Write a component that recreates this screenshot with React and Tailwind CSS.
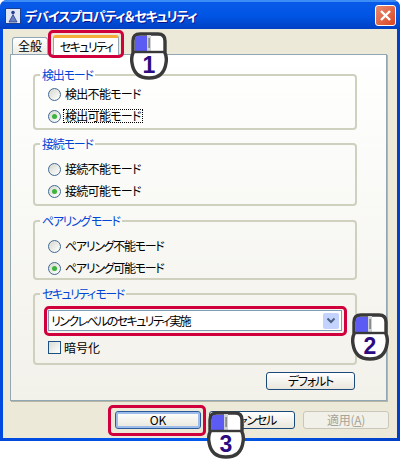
const jp = { fontFamily: '"Noto Sans CJK JP", "Liberation Sans", sans-serif' };
const palt = ' [font-feature-settings:"palt"] ';

function Radio({ checked, label, focus, track }) {
  return (
    <label className={"flex items-center h-[22px] gap-[3px] text-[12px] leading-none text-black whitespace-nowrap" + palt}>
      <span className="flex items-center justify-center w-[13px] h-[13px] rounded-full border border-[#3f6a94] bg-gradient-to-br from-[#d8d8d0] to-white shrink-0">
        {checked && <span className="w-[5px] h-[5px] rounded-full bg-[#3cb43c]" />}
      </span>
      <span className={(focus ? "outline outline-1 outline-dotted outline-black px-px " : "px-px ") + (track || "tracking-[-0.7px]")}>{label}</span>
    </label>
  );
}

function Group({ title, track, className, children }) {
  return (
    <fieldset className={"border-2 border-[#d0d0bf] rounded-[4px] pl-[13px] " + className}>
      <legend className={"-ml-[8px] px-[2px] text-[12px] leading-[14px] text-[#0046d5] whitespace-nowrap " + track + palt}>{title}</legend>
      {children}
    </fieldset>
  );
}

function Btn({ children, className, disabled }) {
  return (
    <button className={"flex items-center justify-center h-[18px] rounded-[3px] border text-[12px] leading-none whitespace-nowrap" + palt +
      (disabled ? "border-[#c9c7ba] text-[#a5a496] bg-[#f2f1e9] " : "border-[#1b4a7a] text-black bg-gradient-to-b from-white to-[#e9e7dc] ") + className}>
      {children}
    </button>
  );
}

function Mouse({ n, className }) {
  return (
    <svg className={"absolute " + className} width="38" height="50" viewBox="0 0 38 50">
      <path d="M10 3 H28 Q35 3 35 10 V22 Q37 26 36 32 Q34 47 19 47 Q4 47 2 32 Q1 26 3 22 V10 Q3 3 10 3 Z" fill="#fff" stroke="#3a3a3a" strokeWidth="3.4" />
      <path d="M5 8 Q5 5 8 5 H18 V20 H5 Z" fill="#5c5cf4" />
      <rect x="17" y="4" width="4" height="17" fill="#cfd3d6" />
      <rect x="18.4" y="7" width="1.4" height="10" fill="#777" />
      <path d="M3 21 H35" stroke="#3a3a3a" strokeWidth="2.4" />
      <text x="19" y="42" textAnchor="middle" fontSize="23" fontWeight="700" fill="#2c0a80" style={{ fontFamily: '"Liberation Sans", sans-serif' }}>{n}</text>
    </svg>
  );
}

function Highlight({ className }) {
  return <div className={"absolute border-[3px] border-[#d0003c] rounded-[5px] pointer-events-none " + className} />;
}

export default function App() {
  return (
    <div className="relative w-[400px] h-[461px] bg-white overflow-hidden" style={jp}>
      <div className="flex flex-col w-[400px] h-[441px] rounded-t-[7px] overflow-hidden bg-gradient-to-r from-[#0049df] via-[#0058ee] to-[#0040c8] px-[3px] pb-[3px]">
        <div className="flex items-center h-[29px] shrink-0 -mx-[3px] px-[5px] bg-gradient-to-b from-[#0a5ae8] via-[#0055e5] to-[#0040c4] border-t-2 border-[#3b8cf5]">
          <svg className="shrink-0" width="16" height="16" viewBox="0 0 16 16">
            <rect x="0.5" y="0.5" width="15" height="15" fill="#dfe6f5" stroke="#1c3f8f" />
            <circle cx="8" cy="4.5" r="1.8" fill="#2b3f8c" />
            <path d="M8 6.5 L4 14 H12 Z" fill="#6a7fc0" stroke="#2b3f8c" strokeWidth="0.8" />
          </svg>
          <span className={"ml-[4px] text-[13px] leading-none font-bold text-white tracking-[-1px] [text-shadow:1px_1px_0_#0f1089] whitespace-nowrap" + palt}>デバイスプロパティ＆セキュリティ</span>
          <span className="ml-auto mr-[-1px] flex items-center justify-center w-[21px] h-[21px] rounded-[3px] border border-white bg-gradient-to-br from-[#e88a6e] to-[#d8431f]">
            <svg width="13" height="13" viewBox="0 0 13 13"><path d="M2 2 L11 11 M11 2 L2 11" stroke="#fff" strokeWidth="2.4" /></svg>
          </span>
        </div>
        <div className="flex-1 flex flex-col bg-[#ece9d8] pl-[7px] pr-[10px]">
          <div className="flex items-end h-[25px] pl-[2px] shrink-0">
            <div className={"flex items-center justify-center w-[36px] h-[17px] border border-b-0 border-[#91a7b4] rounded-t-[3px] bg-gradient-to-b from-white to-[#ecebe4] text-[12px] leading-none whitespace-nowrap" + palt}>全般</div>
            <div className={"flex items-center justify-center ml-[5px] w-[66px] h-[20px] border-x border-[#91a7b4] border-t-[3px] border-t-[#f5ac3a] rounded-t-[3px] bg-white text-[12px] leading-none tracking-[-1.6px] whitespace-nowrap relative top-px z-10" + palt}>セキュリティ</div>
          </div>
          <div className="h-[347px] shrink-0 border border-[#91a7b4] bg-gradient-to-b from-white to-[#f2f1ea] shadow-[1px_1px_0_#b8b5a4] pl-[22px] pr-[29px] pt-[13px]">
            <Group title="検出モード" track="tracking-[-1.2px]" className="h-[62px] pt-[1px]">
              <Radio label="検出不能モード" />
              <Radio checked focus label="検出可能モード" />
            </Group>
            <Group title="接続モード" track="tracking-[-1.2px]" className="h-[69px] mt-[7px] pt-[7px]">
              <Radio label="接続不能モード" />
              <Radio checked label="接続可能モード" />
            </Group>
            <Group title="ペアリング モード" track="tracking-[-1.4px]" className="h-[66px] mt-[8px] pt-[7px]">
              <Radio track="tracking-[-1.3px]" label="ペアリング不能モード" />
              <Radio track="tracking-[-1.3px]" checked label="ペアリング可能モード" />
            </Group>
            <Group title="セキュリティ モード" track="tracking-[-1.6px]" className="h-[78px] mt-[7px] pt-[9px] pr-[13px]">
              <div className={"flex items-center h-[21px] border border-[#7f9db9] bg-white pl-[2px] pr-[2px] text-[12px] leading-none" + palt}>
                <span className="tracking-[-1.6px]">リンクレベルのセキュリティ実施</span>
                <span className="ml-auto flex items-center justify-center w-[16px] h-[16px] rounded-[2px] bg-[#c3d3fd]">
                  <svg width="10" height="8" viewBox="0 0 10 8"><path d="M1.5 1.5 L5 5 L8.5 1.5" fill="none" stroke="#4d6185" strokeWidth="2" /></svg>
                </span>
              </div>
              <div className={"flex items-center gap-[3px] mt-[10px] text-[12px] leading-none" + palt}>
                <span className="w-[13px] h-[13px] border border-[#1c5180] bg-gradient-to-br from-[#dcdcd4] to-white" />
                <span>暗号化</span>
              </div>
            </Group>
            <div className="flex justify-end mt-[7px]">
              <Btn className="w-[89px] mr-[2px] tracking-[-1.2px]">デフォルト</Btn>
            </div>
          </div>
          <div className="flex justify-end gap-[8px] mt-[10px] -mr-[2px]">
            <Btn className="w-[86px] !border-[#2a5a9c] shadow-[inset_0_0_0_2px_#9dbcea]">OK</Btn>
            <Btn className="w-[86px] tracking-[-1.2px]">キャンセル</Btn>
            <Btn disabled className="w-[86px] tracking-[-0.3px]">適用(<span className="underline">A</span>)</Btn>
          </div>
        </div>
      </div>
      <Highlight className="left-[48px] top-[30px] w-[76px] h-[28px]" />
      <Highlight className="left-[44px] top-[306px] w-[303px] h-[30px]" />
      <Highlight className="left-[108px] top-[405px] w-[98px] h-[31px]" />
      <Mouse n="1" className="left-[130px] top-[31px]" />
      <Mouse n="2" className="left-[351px] top-[312px]" />
      <Mouse n="3" className="left-[207px] top-[410px]" />
    </div>
  );
}
